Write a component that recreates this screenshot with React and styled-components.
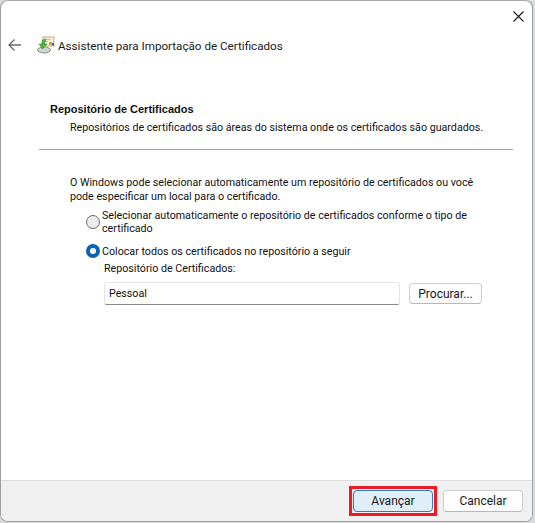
import React from "react";
import styled, { createGlobalStyle } from "styled-components";

const Global = createGlobalStyle`
  html, body {
    margin: 0;
    padding: 0;
    background: #ffffff;
  }
  * {
    box-sizing: border-box;
  }
`;

const Screen = styled.div`
  width: 535px;
  height: 523px;
  overflow: hidden;
  background: #d9dadb;
  display: flex;
`;

const Dialog = styled.div`
  width: 533px;
  height: 522px;
  background: #ffffff;
  border: 1px solid #9f9f9f;
  border-top-color: #a8a8a8;
  border-radius: 8px;
  overflow: hidden;
  display: flex;
  flex-direction: column;
  font-family: Roboto, "Noto Sans", sans-serif;
  font-size: 10.7px;
  color: #111111;
`;

const CloseRow = styled.div`
  height: 29px;
  display: flex;
  justify-content: flex-end;
  align-items: center;
  padding: 1px 8px 0 0;
  flex: none;
`;

const Header = styled.div`
  height: 30px;
  display: flex;
  align-items: center;
  padding-left: 7px;
  flex: none;
`;

const BackIcon = styled.svg`
  width: 14px;
  height: 14px;
  margin-right: 15px;
`;

const WizardIcon = styled.svg`
  width: 18px;
  height: 18px;
  margin-right: 3px;
`;

const Title = styled.div`
  font-size: 11.65px;
  line-height: 16px;
  padding-top: 1px;
  color: #1a1a1a;
`;

const Main = styled.div`
  flex: 1;
  display: flex;
  flex-direction: column;
  padding: 43px 19px 0 38px;
`;

const SectionTitle = styled.div`
  font-family: "Liberation Sans", sans-serif;
  font-size: 11px;
  font-weight: 700;
  line-height: 13px;
  padding-left: 11px;
  color: #111111;
`;

const SectionText = styled.div`
  line-height: 16px;
  padding: 4px 0 0 31px;
  white-space: nowrap;
`;

const Divider = styled.div`
  height: 1px;
  background: #a2a2a2;
  margin-top: 13px;
`;

const Body = styled.div`
  padding: 26px 24px 0 31px;
`;

const Intro = styled.div`
  line-height: 14px;
  width: 410px;
`;

const Options = styled.div`
  display: flex;
  flex-direction: column;
  margin-top: 5px;
  padding-left: 16px;
`;

const Option = styled.div`
  display: flex;
  align-items: ${({ $top }) => ($top ? "flex-start" : "center")};
  margin-bottom: ${({ $gap }) => $gap || 0}px;
`;

const Radio = styled.span`
  width: 14px;
  height: 14px;
  border-radius: 50%;
  flex: none;
  margin: ${({ $top }) => ($top ? "6px" : "0")} 2px 0 0;
  background: ${({ $on }) => ($on ? "#ffffff" : "#ececec")};
  border: ${({ $on }) => ($on ? "4px solid #0a62b4" : "1px solid #6f6f6f")};
`;

const OptionText = styled.div`
  line-height: 13px;
  width: 375px;
`;

const StoreBlock = styled.div`
  padding-left: 34px;
  margin-top: 3px;
`;

const StoreLabel = styled.div`
  line-height: 16px;
`;

const StoreRow = styled.div`
  display: flex;
  align-items: center;
  gap: 9px;
  margin-top: 5px;
`;

const Input = styled.div`
  width: 296px;
  height: 23px;
  background: #ffffff;
  border: 1px solid #e4e4e4;
  border-bottom: 1px solid #8a8a8a;
  border-radius: 3px;
  padding-left: 4px;
  display: flex;
  align-items: center;
`;

const Button = styled.div`
  display: flex;
  align-items: center;
  justify-content: center;
  width: ${({ $w }) => $w}px;
  height: ${({ $h }) => $h}px;
  font-size: 12px;
  background: ${({ $primary }) => ($primary ? "#e0eef9" : "#fdfdfd")};
  border: 1px solid ${({ $primary }) => ($primary ? "#2f7dbd" : "#d0d0d0")};
  border-bottom-color: ${({ $primary }) => ($primary ? "#2f7dbd" : "#b8b8b8")};
  border-radius: 4px;
  color: #1a1a1a;
`;

const Footer = styled.div`
  height: 41px;
  background: #f0f0f0;
  border-top: 1px solid #dfdfdf;
  display: flex;
  align-items: center;
  justify-content: flex-end;
  gap: 6px;
  padding: 0 9px 0 0;
  flex: none;
`;

const Highlight = styled.div`
  border: 3px solid #ed1c24;
  padding: 1px;
  display: flex;
`;

export default function App() {
  return (
    <Screen>
      <Global />
      <Dialog>
        <CloseRow>
          <svg width="11" height="11" viewBox="0 0 11 11">
            <path d="M.5.5l10 10M10.5.5l-10 10" stroke="#1a1a1a" strokeWidth="1.1" fill="none" />
          </svg>
        </CloseRow>
        <Header>
          <BackIcon viewBox="0 0 14 14">
            <path d="M13 7H1.5M6.5 1.5L1 7l5.5 5.5" stroke="#6a6a6a" strokeWidth="1.3" fill="none" />
          </BackIcon>
          <WizardIcon viewBox="0 0 18 18">
            <rect x="6" y="1" width="11" height="9" fill="#f5f0dc" stroke="#b9ae8e" />
            <path d="M8 3.5h6M8 5.5h3" stroke="#c9c2aa" />
            <rect x="12" y="6" width="3" height="3" fill="#e89a1c" />
            <rect x="15" y="7" width="2" height="2.5" fill="#2f62c4" />
            <ellipse cx="7" cy="14" rx="6.5" ry="3" fill="#cfd3d2" stroke="#8b9190" />
            <path d="M9 3L7.5 8H10L5.5 13 2 8h2.5L5.5 4z" fill="#4fb336" stroke="#2f8a22" strokeWidth=".5" />
          </WizardIcon>
          <Title>Assistente para Importação de Certificados</Title>
        </Header>
        <Main>
          <SectionTitle>Repositório de Certificados</SectionTitle>
          <SectionText>Repositórios de certificados são áreas do sistema onde os certificados são guardados.</SectionText>
          <Divider />
          <Body>
            <Intro>O Windows pode selecionar automaticamente um repositório de certificados ou você pode especificar um local para o certificado.</Intro>
            <Options>
              <Option $top $gap={9}>
                <Radio $top />
                <OptionText>Selecionar automaticamente o repositório de certificados conforme o tipo de certificado</OptionText>
              </Option>
              <Option>
                <Radio $on />
                <OptionText>Colocar todos os certificados no repositório a seguir</OptionText>
              </Option>
            </Options>
            <StoreBlock>
              <StoreLabel>Repositório de Certificados:</StoreLabel>
              <StoreRow>
                <Input>Pessoal</Input>
                <Button $w={73} $h={21}>Procurar...</Button>
              </StoreRow>
            </StoreBlock>
          </Body>
        </Main>
        <Footer>
          <Highlight>
            <Button $primary $w={80} $h={22}>Avançar</Button>
          </Highlight>
          <Button $w={80} $h={22}>Cancelar</Button>
        </Footer>
      </Dialog>
    </Screen>
  );
}
